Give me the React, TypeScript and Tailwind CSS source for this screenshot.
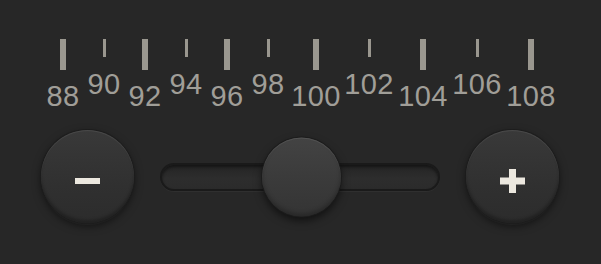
import React from "react";

type Mark = {
    label: string;
    major: boolean;
    width: string;
};

const marks: Mark[] = [
    { label: "88", major: true, width: "w-[42px]" },
    { label: "90", major: false, width: "w-[40px]" },
    { label: "92", major: true, width: "w-[42px]" },
    { label: "94", major: false, width: "w-[40px]" },
    { label: "96", major: true, width: "w-[42px]" },
    { label: "98", major: false, width: "w-[40px]" },
    { label: "100", major: true, width: "w-[56px]" },
    { label: "102", major: false, width: "w-[50px]" },
    { label: "104", major: true, width: "w-[58px]" },
    { label: "106", major: false, width: "w-[50px]" },
    { label: "108", major: true, width: "w-[58px]" },
];

const RoundButton: React.FC<{ children: React.ReactNode; label: string }> = ({
    children,
    label,
}) => (
    <button
        aria-label={label}
        className="flex h-[93px] w-[93px] shrink-0 items-center justify-center rounded-full bg-[linear-gradient(180deg,#393939_0%,#303030_60%,#2c2c2c_100%)] shadow-[0_0_0_1px_#1d1d1d,0_3px_8px_rgba(0,0,0,0.55),0_2px_0_rgba(255,255,255,0.05),inset_0_1px_1px_rgba(255,255,255,0.09),inset_0_-3px_3px_rgba(0,0,0,0.25)]"
    >
        <span className="mt-[8px]">{children}</span>
    </button>
);

const App: React.FC = () => {
    return (
        <div className="flex h-[264px] w-[601px] flex-col bg-[#272727] pt-[39px] font-['Liberation_Sans',Arial,sans-serif]">
            {/* dial scale */}
            <div className="flex items-start pl-[42px]">
                {marks.map((m, i) => (
                    <div
                        key={m.label}
                        className={`${m.width} flex shrink-0 flex-col items-center`}
                    >
                        <div className="flex h-[31px] items-start">
                            {m.major ? (
                                <div className="h-[31px] w-[6px] bg-[#9a978f]" />
                            ) : (
                                <div className="h-[18px] w-[3px] bg-[#9a978f]" />
                            )}
                        </div>
                        <span
                            className={`${
                                i % 2 === 0 ? "mt-[12px]" : "mt-0"
                            } text-[29px] leading-[28px] tracking-[0.3px] text-[#a09e98]`}
                        >
                            {m.label}
                        </span>
                    </div>
                ))}
            </div>

            {/* controls */}
            <div className="mt-[20px] flex items-center pl-[41px]">
                <RoundButton label="Decrease">
                    <svg width="25" height="6" viewBox="0 0 25 6">
                        <rect width="25" height="6" fill="#ece8df" />
                    </svg>
                </RoundButton>

                <div className="relative ml-[26px] h-[28px] w-[280px] shrink-0 rounded-full border-2 border-[#1a1a1a] bg-[linear-gradient(180deg,#242424_0%,#2d2d2d_55%,#2b2b2b_100%)] shadow-[inset_0_2px_3px_rgba(0,0,0,0.45),0_1px_0_rgba(255,255,255,0.04)]">
                    <div className="absolute left-[100px] top-1/2 h-[79px] w-[79px] -translate-y-1/2 rounded-full bg-[linear-gradient(180deg,#434343_0%,#3b3b3b_50%,#343434_100%)] shadow-[0_0_0_1px_#1c1c1c,0_4px_8px_rgba(0,0,0,0.6),inset_0_1px_1px_rgba(255,255,255,0.1),inset_0_-3px_4px_rgba(0,0,0,0.25)]" />
                </div>

                <div className="ml-[26px]">
                    <RoundButton label="Increase">
                        <svg width="25" height="24" viewBox="0 0 25 24">
                            <rect x="0" y="8.5" width="25" height="7" fill="#ece8df" />
                            <rect x="9" y="0" width="7" height="24" fill="#ece8df" />
                        </svg>
                    </RoundButton>
                </div>
            </div>
        </div>
    );
};

export default App;
